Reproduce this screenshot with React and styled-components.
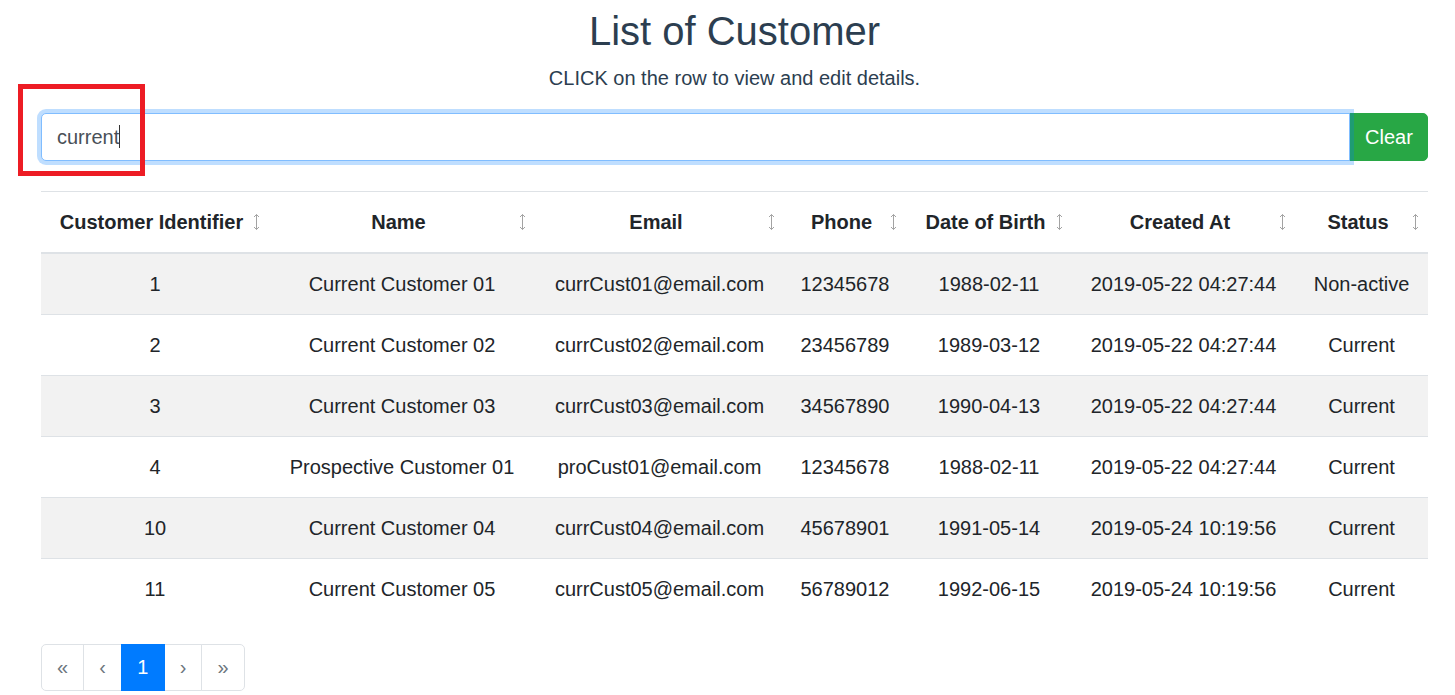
import styled, { createGlobalStyle } from 'styled-components';

const GlobalStyle = createGlobalStyle`
    html, body {
        margin: 0;
        padding: 0;
        background: #fff;
    }
    body {
        font-family: "Liberation Sans", Arial, Helvetica, sans-serif;
        font-size: 20px;
        color: #212529;
    }
    * {
        box-sizing: border-box;
    }
`;

const customers = [
    { id: 1, name: 'Current Customer 01', email: 'currCust01@email.com', phone: '12345678', dob: '1988-02-11', created: '2019-05-22 04:27:44', status: 'Non-active' },
    { id: 2, name: 'Current Customer 02', email: 'currCust02@email.com', phone: '23456789', dob: '1989-03-12', created: '2019-05-22 04:27:44', status: 'Current' },
    { id: 3, name: 'Current Customer 03', email: 'currCust03@email.com', phone: '34567890', dob: '1990-04-13', created: '2019-05-22 04:27:44', status: 'Current' },
    { id: 4, name: 'Prospective Customer 01', email: 'proCust01@email.com', phone: '12345678', dob: '1988-02-11', created: '2019-05-22 04:27:44', status: 'Current' },
    { id: 10, name: 'Current Customer 04', email: 'currCust04@email.com', phone: '45678901', dob: '1991-05-14', created: '2019-05-24 10:19:56', status: 'Current' },
    { id: 11, name: 'Current Customer 05', email: 'currCust05@email.com', phone: '56789012', dob: '1992-06-15', created: '2019-05-24 10:19:56', status: 'Current' },
];

const columns = [
    { label: 'Customer Identifier', width: 228 },
    { label: 'Name', width: 266 },
    { label: 'Email', width: 249 },
    { label: 'Phone', width: 122 },
    { label: 'Date of Birth', width: 166 },
    { label: 'Created At', width: 223 },
    { label: 'Status', width: 133 },
];

// Icon mũi tên sắp xếp
const SortIcon = () => (
    <SortMark>
        <svg width="7" height="18" viewBox="0 0 7 18" fill="none" stroke="#a3a3a3" strokeWidth="1">
            <path d="M3.5 1.5V16.5" />
            <path d="M1 4L3.5 1.5L6 4" />
            <path d="M1 14L3.5 16.5L6 14" />
        </svg>
    </SortMark>
);

const App = () => (
    <Page>
        <GlobalStyle />
        <Title>List of Customer</Title>
        <Subtitle>CLICK on the row to view and edit details.</Subtitle>

        <SearchGroup>
            <SearchField>
                <SearchInput type="text" defaultValue="current" />
                <Caret />
            </SearchField>
            <ClearButton type="button">Clear</ClearButton>
        </SearchGroup>

        <Table>
            <colgroup>
                {columns.map((c) => (
                    <col key={c.label} style={{ width: c.width }} />
                ))}
            </colgroup>
            <thead>
                <tr>
                    {columns.map((c) => (
                        <HeadCell key={c.label}>
                            {c.label}
                            <SortIcon />
                        </HeadCell>
                    ))}
                </tr>
            </thead>
            <tbody>
                {customers.map((c, i) => (
                    <Row key={c.id} $striped={i % 2 === 0}>
                        <Cell>{c.id}</Cell>
                        <Cell>{c.name}</Cell>
                        <Cell>{c.email}</Cell>
                        <Cell>{c.phone}</Cell>
                        <Cell>{c.dob}</Cell>
                        <Cell>{c.created}</Cell>
                        <Cell>{c.status}</Cell>
                    </Row>
                ))}
            </tbody>
        </Table>

        <Pagination>
            <PageLink $first>«</PageLink>
            <PageLink>‹</PageLink>
            <PageLink $active>1</PageLink>
            <PageLink>›</PageLink>
            <PageLink $last>»</PageLink>
        </Pagination>

        <Highlight />
    </Page>
);

const Page = styled.div`
    position: relative;
    padding: 7px 27px 0 41px;
    display: flex;
    flex-direction: column;
    align-items: stretch;
    text-align: center;
`;

const Title = styled.h2`
    margin: 0;
    font-size: 40px;
    font-weight: 400;
    line-height: 48px;
    color: #2c3e50;
`;

const Subtitle = styled.p`
    margin: 8px 0 0;
    font-size: 20px;
    line-height: 30px;
    color: #2c3e50;
`;

const SearchGroup = styled.div`
    display: flex;
    margin-top: 20px;
    height: 48px;
`;

const SearchField = styled.div`
    position: relative;
    z-index: 2;
    flex: 1;
    display: flex;
    min-width: 0;
`;

const SearchInput = styled.input`
    flex: 1;
    min-width: 0;
    height: 48px;
    padding: 0 15px;
    font-family: inherit;
    font-size: 20px;
    color: #495057;
    background: #fff;
    border: 1px solid #80bdff;
    border-radius: 5px 0 0 5px;
    box-shadow: 0 0 0 4px rgba(0, 123, 255, 0.25);
    outline: none;
`;

// con trỏ nhập liệu
const Caret = styled.span`
    position: absolute;
    left: 78px;
    top: 12px;
    width: 1px;
    height: 23px;
    background: #333;
`;

const ClearButton = styled.button`
    width: 79px;
    height: 48px;
    margin-left: -1px;
    padding: 0 15px;
    font-family: inherit;
    font-size: 20px;
    color: #fff;
    background: #28a745;
    border: 1px solid #28a745;
    border-radius: 0 5px 5px 0;
    cursor: pointer;
`;

const Table = styled.table`
    margin-top: 30px;
    width: 100%;
    table-layout: fixed;
    border-collapse: collapse;
    color: #212529;
`;

const HeadCell = styled.th`
    position: relative;
    padding: 15px 22px 15px 15px;
    font-size: 20px;
    font-weight: 700;
    line-height: 30px;
    text-align: center;
    white-space: nowrap;
    border-top: 1px solid #dee2e6;
    border-bottom: 2px solid #dee2e6;
`;

const SortMark = styled.span`
    position: absolute;
    right: 9px;
    top: 50%;
    transform: translateY(-50%);
    display: flex;
`;

const Row = styled.tr`
    background: ${(p) => (p.$striped ? '#f2f2f2' : '#fff')};
`;

const Cell = styled.td`
    padding: 15px;
    font-size: 20px;
    line-height: 30px;
    text-align: center;
    white-space: nowrap;
    border-top: 1px solid #dee2e6;
`;

const Pagination = styled.div`
    display: flex;
    align-self: flex-start;
    margin-top: 25px;
`;

const PageLink = styled.span`
    display: block;
    margin-left: ${(p) => (p.$first ? '0' : '-1px')};
    padding: 10px 15px;
    font-size: 20px;
    line-height: 25px;
    color: ${(p) => (p.$active ? '#fff' : '#6c757d')};
    background: ${(p) => (p.$active ? '#007bff' : '#fff')};
    border: 1px solid ${(p) => (p.$active ? '#007bff' : '#dee2e6')};
    border-radius: ${(p) => (p.$first ? '5px 0 0 5px' : p.$last ? '0 5px 5px 0' : '0')};
    position: ${(p) => (p.$active ? 'relative' : 'static')};
    z-index: ${(p) => (p.$active ? 1 : 'auto')};
    min-width: ${(p) => (p.$active ? '44px' : 'auto')};
`;

// Khung đỏ đánh dấu ô tìm kiếm
const Highlight = styled.div`
    position: absolute;
    z-index: 5;
    left: 18px;
    top: 84px;
    width: 127px;
    height: 92px;
    border: 5px solid #ed1c24;
    pointer-events: none;
`;

export default App;
